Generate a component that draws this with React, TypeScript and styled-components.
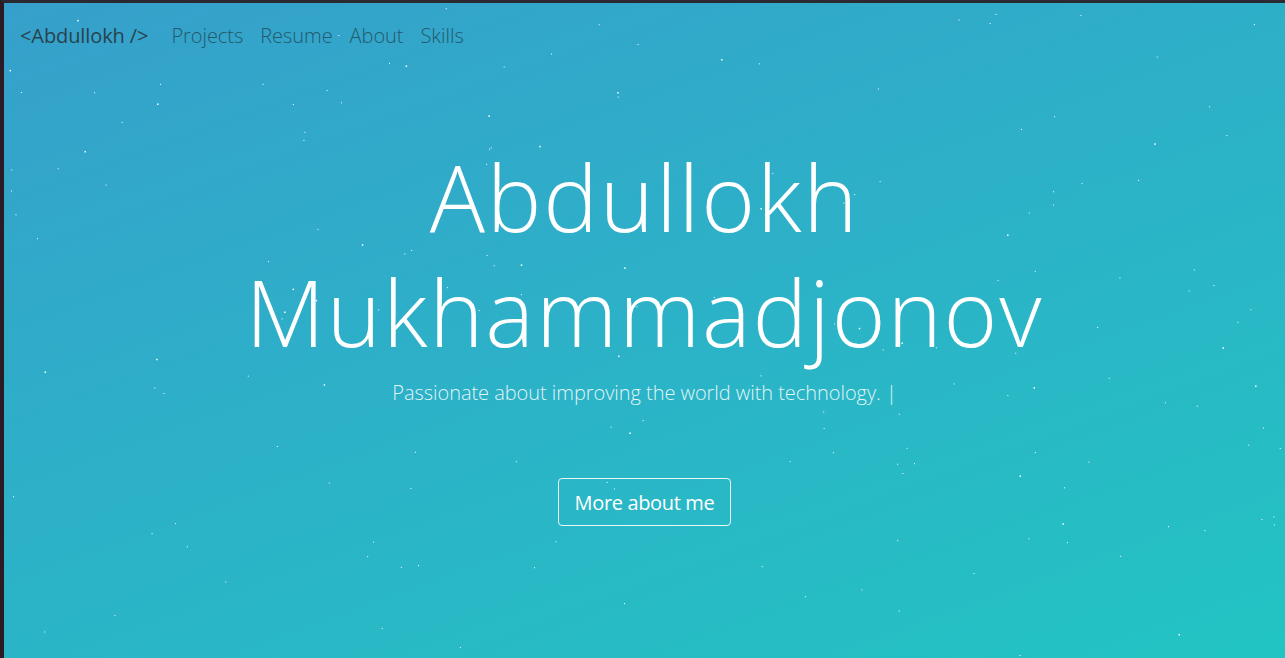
import React from "react";
import styled, { createGlobalStyle } from "styled-components";

const Global = createGlobalStyle`
  html, body { margin: 0; padding: 0; background: #2b2a33; }
  body { font-family: "Open Sans", "Noto Sans", sans-serif; }
  * { box-sizing: border-box; }
`;

const Frame = styled.div`
  width: 1285px;
  height: 658px;
  border-top: 3px solid #2b2a33;
  border-left: 4px solid #2a1b25;
  overflow: hidden;
`;

const Hero = styled.main`
  position: relative;
  height: 100%;
  background: linear-gradient(160deg, #36a0cb 0%, #2db0c8 45%, #22c4c3 100%);
  display: flex;
  flex-direction: column;
  color: #fff;
`;

const Stars = styled.svg`
  position: absolute;
  inset: 0;
  width: 100%;
  height: 100%;
  pointer-events: none;
`;

const Nav = styled.nav`
  position: relative;
  display: flex;
  align-items: center;
  gap: 17px;
  padding: 17px 16px 0 16px;
  height: 47px;
`;

const Brand = styled.span`
  font-size: 20px;
  color: #27424d;
  margin-right: 6px;
  letter-spacing: -0.1px;
`;

const NavLink = styled.a`
  font-size: 20px;
  font-weight: 300;
  color: #235a6c;
  text-decoration: none;
  letter-spacing: -0.05px;
`;

const Content = styled.section`
  position: relative;
  display: flex;
  flex-direction: column;
  align-items: center;
  text-align: center;
  padding-top: 89px;
`;

const Title = styled.h1`
  margin: 0;
  font-weight: 300;
  font-size: 92px;
  line-height: 115px;
  letter-spacing: 1.8px;
  color: #ffffff;
`;

const Tagline = styled.p`
  margin: 10px 0 0;
  font-size: 20px;
  font-weight: 300;
  color: rgba(255, 255, 255, 0.88);
  letter-spacing: -0.05px;
`;

const Button = styled.a`
  margin-top: 72px;
  display: inline-flex;
  align-items: center;
  justify-content: center;
  width: 173px;
  height: 48px;
  border: 1px solid rgba(255, 255, 255, 0.9);
  border-radius: 4px;
  font-size: 20px;
  color: #fff;
  text-decoration: none;
  letter-spacing: -0.35px;
`;

function makeStars() {
  let s = 12345;
  const rnd = () => {
    s = (s * 1103515245 + 12345) % 2147483648;
    return s / 2147483648;
  };
  const pts: { x: number; y: number; r: number }[] = [];
  for (let i = 0; i < 170; i++) {
    pts.push({ x: rnd() * 1281, y: rnd() * 655, r: rnd() > 0.8 ? 1.5 : 1 });
  }
  return pts;
}

const starPts = makeStars();

export default function App() {
  return (
    <>
      <Global />
      <Frame>
        <Hero>
          <Stars viewBox="0 0 1281 655">
            {starPts.map((p, i) => (
              <rect key={i} x={p.x} y={p.y} width={p.r} height={p.r} fill="#fff" />
            ))}
          </Stars>
          <Nav>
            <Brand>&lt;Abdullokh /&gt;</Brand>
            <NavLink href="#">Projects</NavLink>
            <NavLink href="#">Resume</NavLink>
            <NavLink href="#">About</NavLink>
            <NavLink href="#">Skills</NavLink>
          </Nav>
          <Content>
            <Title>
              Abdullokh
              <br />
              Mukhammadjonov
            </Title>
            <Tagline>Passionate about improving the world with technology. |</Tagline>
            <Button href="#">More about me</Button>
          </Content>
        </Hero>
      </Frame>
    </>
  );
}
